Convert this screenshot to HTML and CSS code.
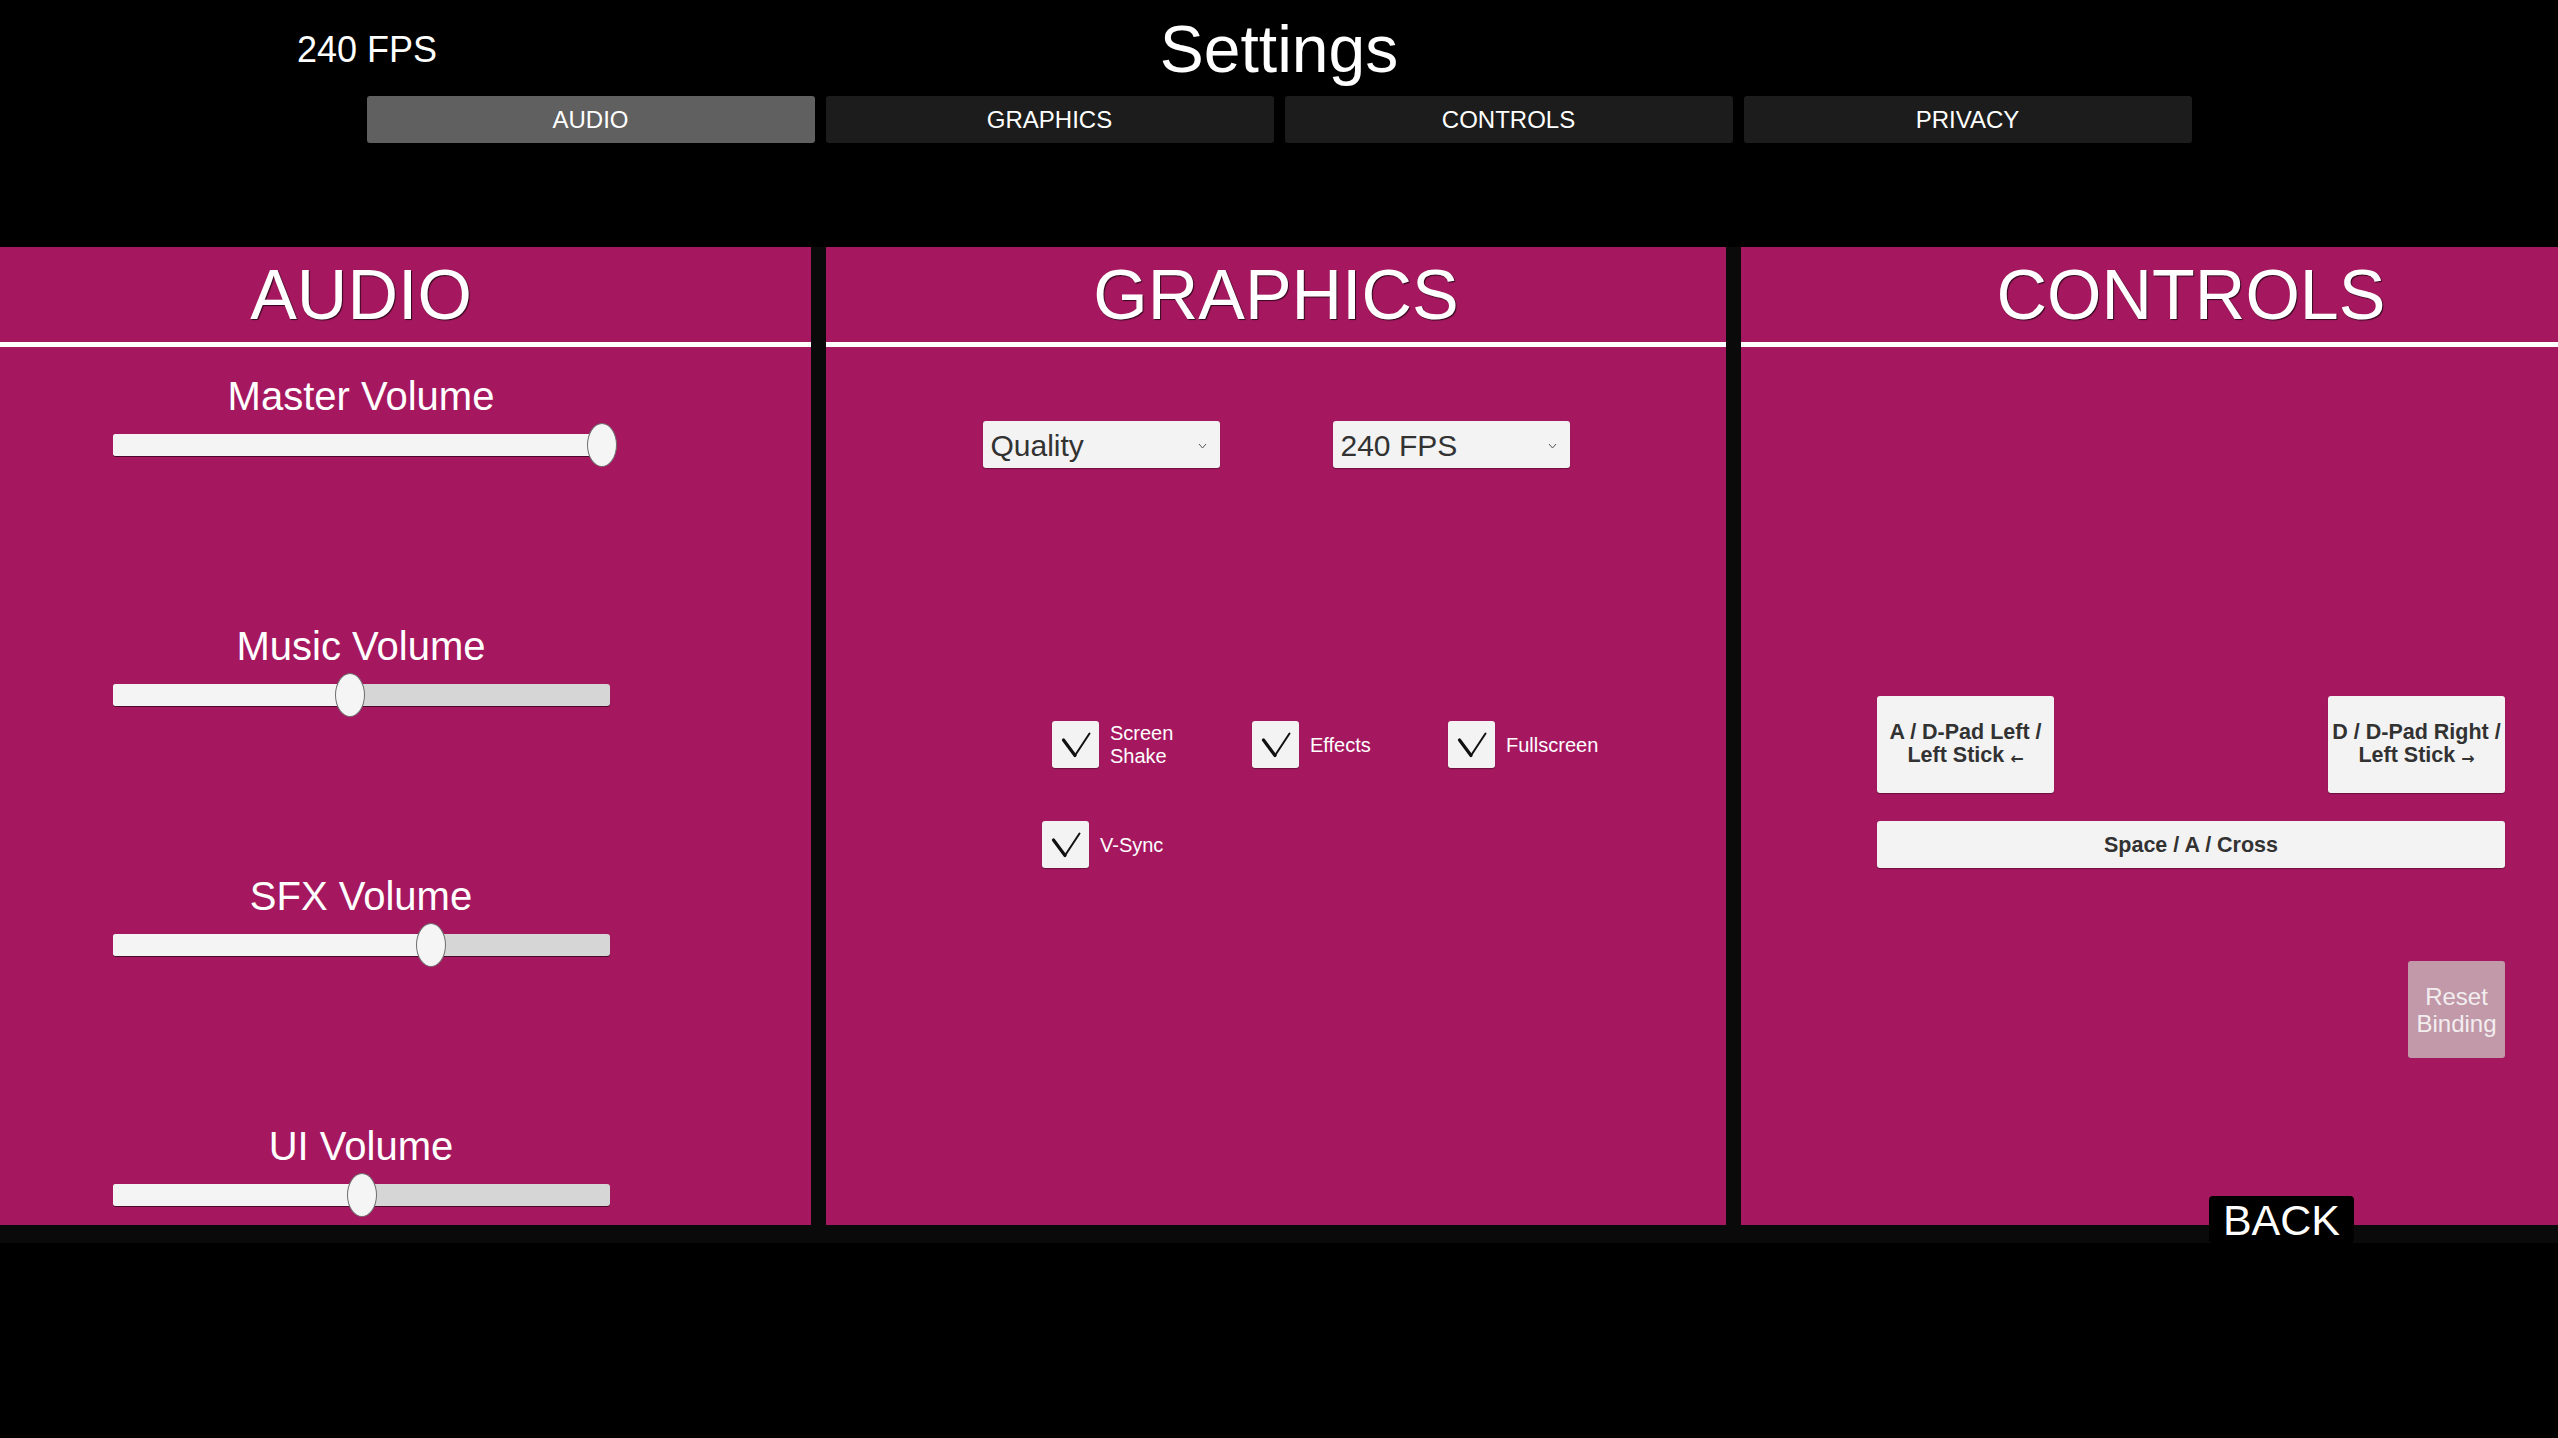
FILE: index.html
```html
<!DOCTYPE html>
<html lang="en">
<head>
  <meta charset="UTF-8">
  <meta name="viewport" content="width=device-width, initial-scale=1.0">
  <title>Settings</title>
  <link rel="stylesheet" href="styles.css">
</head>
<body>

  <!-- Header: fps counter and title -->
  <header class="header">
    <div class="fps">240 FPS</div>
    <h1 class="title">Settings</h1>
    <div></div>
  </header>

  <!-- Tabs -->
  <nav class="tabs">
    <button class="tab active">AUDIO</button>
    <button class="tab">GRAPHICS</button>
    <button class="tab">CONTROLS</button>
    <button class="tab">PRIVACY</button>
  </nav>

  <!-- Scrolling panels -->
  <div class="panels">
    <div class="panel-strip">

      <section class="panel">
        <h2 class="panel-title">AUDIO</h2>
        <div class="audio-body">
          <div class="volume">
            <div class="volume-label">Master Volume</div>
            <div class="slider">
              <div class="fill" style="width: 98.4%"></div>
              <div class="knob" style="left: 98.4%"></div>
            </div>
          </div>
          <div class="volume">
            <div class="volume-label">Music Volume</div>
            <div class="slider">
              <div class="fill" style="width: 47.7%"></div>
              <div class="knob" style="left: 47.7%"></div>
            </div>
          </div>
          <div class="volume">
            <div class="volume-label">SFX Volume</div>
            <div class="slider">
              <div class="fill" style="width: 64%"></div>
              <div class="knob" style="left: 64%"></div>
            </div>
          </div>
          <div class="volume">
            <div class="volume-label">UI Volume</div>
            <div class="slider">
              <div class="fill" style="width: 50.2%"></div>
              <div class="knob" style="left: 50.2%"></div>
            </div>
          </div>
        </div>
      </section>

      <section class="panel">
        <h2 class="panel-title">GRAPHICS</h2>
        <div class="graphics-body">
          <div class="dropdowns">
            <div class="dropdown">
              <span>Quality</span>
              <svg class="caret" width="9" height="6" viewBox="0 0 9 6"><polyline points="1,1 4.5,5 8,1" fill="none" stroke="#555" stroke-width="1"/></svg>
            </div>
            <div class="dropdown">
              <span>240 FPS</span>
              <svg class="caret" width="9" height="6" viewBox="0 0 9 6"><polyline points="1,1 4.5,5 8,1" fill="none" stroke="#555" stroke-width="1"/></svg>
            </div>
          </div>

          <div class="toggle-row">
            <label class="toggle">
              <span class="check"><svg width="47" height="47" viewBox="0 0 47 47"><line x1="11.5" y1="19" x2="23" y2="34.5" stroke="#111" stroke-width="3.2" stroke-linecap="round"/><line x1="23" y1="34.5" x2="37.5" y2="12.5" stroke="#111" stroke-width="2" stroke-linecap="round"/></svg></span>
              <span class="toggle-text">Screen<br>Shake</span>
            </label>
            <label class="toggle">
              <span class="check"><svg width="47" height="47" viewBox="0 0 47 47"><line x1="11.5" y1="19" x2="23" y2="34.5" stroke="#111" stroke-width="3.2" stroke-linecap="round"/><line x1="23" y1="34.5" x2="37.5" y2="12.5" stroke="#111" stroke-width="2" stroke-linecap="round"/></svg></span>
              <span class="toggle-text">Effects</span>
            </label>
            <label class="toggle">
              <span class="check"><svg width="47" height="47" viewBox="0 0 47 47"><line x1="11.5" y1="19" x2="23" y2="34.5" stroke="#111" stroke-width="3.2" stroke-linecap="round"/><line x1="23" y1="34.5" x2="37.5" y2="12.5" stroke="#111" stroke-width="2" stroke-linecap="round"/></svg></span>
              <span class="toggle-text">Fullscreen</span>
            </label>
          </div>

          <div class="toggle-row second">
            <label class="toggle">
              <span class="check"><svg width="47" height="47" viewBox="0 0 47 47"><line x1="11.5" y1="19" x2="23" y2="34.5" stroke="#111" stroke-width="3.2" stroke-linecap="round"/><line x1="23" y1="34.5" x2="37.5" y2="12.5" stroke="#111" stroke-width="2" stroke-linecap="round"/></svg></span>
              <span class="toggle-text">V-Sync</span>
            </label>
          </div>
        </div>
      </section>

      <section class="panel">
        <h2 class="panel-title">CONTROLS</h2>
        <div class="controls-body">
          <div class="bind-row">
            <button class="bind">A / D-Pad Left /<br>Left Stick <span class="arrow">←</span></button>
            <button class="bind">D / D-Pad Right /<br>Left Stick <span class="arrow">→</span></button>
          </div>
          <button class="bind wide">Space / A / Cross</button>
          <div class="reset-row">
            <button class="reset-btn">Reset<br>Binding</button>
          </div>
        </div>
      </section>

    </div>

    <button class="back-btn">BACK</button>
  </div>

</body>
</html>
```

FILE: styles.css
```css
/* Page */
body {
  margin: 0;
  width: 2558px;
  height: 1438px;
  overflow: hidden;
  background-color: #000;
  color: white;
  font-family: "Liberation Sans", Arial, sans-serif;
}

button {
  font-family: inherit;
  border: none;
  cursor: pointer;
}

/* Header */
.header {
  display: grid;
  grid-template-columns: 1fr auto 1fr;
  height: 96px;
  align-items: start;
}

.fps {
  margin-top: 30px;
  padding-left: 297px;
  font-size: 36px;
  line-height: 40px;
}

.title {
  margin: 13px 0 0;
  font-size: 66px;
  line-height: 72px;
  font-weight: normal;
}

/* Tabs */
.tabs {
  display: flex;
  justify-content: center;
  gap: 11px;
  margin-bottom: 104px;
}

.tab {
  width: 448px;
  height: 47px;
  background-color: #1c1c1c;
  color: white;
  font-size: 24px;
  border-radius: 3px;
}

.tab.active {
  background-color: #606060;
}

/* Panels */
.panels {
  position: relative;
  background-color: #0a0a0a;
  padding-bottom: 18px;
  overflow: hidden;
}

.panel-strip {
  display: flex;
  gap: 15px;
  margin-left: -89px;
}

.panel {
  flex-shrink: 0;
  width: 900px;
  height: 978px;
  background-color: #a5185f;
}

.panel-title {
  margin: 0;
  height: 95px;
  line-height: 97px;
  text-align: center;
  font-size: 70px;
  font-weight: normal;
  border-bottom: 5px solid white;
  text-shadow: 1px 1px 1px rgba(0, 0, 0, 0.7);
}

/* Audio */
.audio-body {
  padding-top: 27px;
}

.volume {
  margin-bottom: 168px;
}

.volume-label {
  text-align: center;
  font-size: 40px;
  line-height: 44px;
  margin-bottom: 16px;
}

.slider {
  position: relative;
  width: 497px;
  height: 22px;
  margin: 0 auto;
  background-color: #d6d6d6;
  border-radius: 3px;
  box-shadow: 0 1px 0 rgba(0, 0, 0, 0.55);
}

.slider .fill {
  height: 100%;
  background-color: #f4f4f4;
  border-radius: 3px 0 0 3px;
}

.slider .knob {
  position: absolute;
  top: -11px;
  width: 28px;
  height: 42px;
  margin-left: -15px;
  border-radius: 50%;
  background-color: #f5f5f5;
  border: 1px solid #6e6e6e;
}

/* Graphics */
.graphics-body {
  padding-top: 74px;
}

.dropdowns {
  display: flex;
  justify-content: center;
  gap: 113px;
}

.dropdown {
  display: flex;
  align-items: center;
  justify-content: space-between;
  box-sizing: border-box;
  width: 237px;
  height: 47px;
  padding: 2px 13px 0 8px;
  background-color: #f3f3f3;
  color: #323232;
  font-size: 30px;
  border-radius: 3px;
  box-shadow: 0 1px 1px rgba(0, 0, 0, 0.35);
}

.toggle-row {
  display: grid;
  grid-template-columns: 200px 196px auto;
  padding-left: 226px;
  margin-top: 252px;
}

.toggle-row.second {
  padding-left: 216px;
  margin-top: 53px;
}

.toggle {
  display: flex;
  align-items: center;
  gap: 11px;
}

.check {
  display: block;
  width: 47px;
  height: 47px;
  background-color: #f3f3f3;
  border-radius: 3px;
  box-shadow: 0 1px 1px rgba(0, 0, 0, 0.35);
}

.check svg {
  display: block;
}

.toggle-text {
  font-size: 20px;
  line-height: 23px;
  padding-top: 2px;
}

/* Controls */
.controls-body {
  padding: 349px 136px 0;
}

.bind-row {
  display: flex;
  justify-content: space-between;
  margin-bottom: 28px;
}

.bind {
  display: block;
  width: 177px;
  height: 97px;
  padding: 2px 0 0;
  background-color: #f3f3f3;
  color: #323232;
  font-size: 21.5px;
  font-weight: bold;
  line-height: 23px;
  text-align: center;
  white-space: nowrap;
  border-radius: 3px;
  box-shadow: 0 1px 1px rgba(0, 0, 0, 0.35);
}

.bind .arrow {
  font-family: "DejaVu Sans", sans-serif;
  font-size: 16px;
  vertical-align: -2px;
}

.bind.wide {
  width: 100%;
  height: 47px;
}

.reset-row {
  display: flex;
  justify-content: flex-end;
  margin-top: 93px;
}

.reset-btn {
  width: 97px;
  height: 97px;
  padding: 0;
  background-color: #c299a9;
  color: #f2eef0;
  font-size: 24px;
  line-height: 27px;
  border-radius: 3px;
}

/* Back button */
.back-btn {
  position: absolute;
  right: 204px;
  bottom: 0;
  height: 47px;
  padding: 2px 14px 0;
  background-color: #000;
  color: white;
  font-size: 43px;
  line-height: 45px;
  border-radius: 4px;
}
```
